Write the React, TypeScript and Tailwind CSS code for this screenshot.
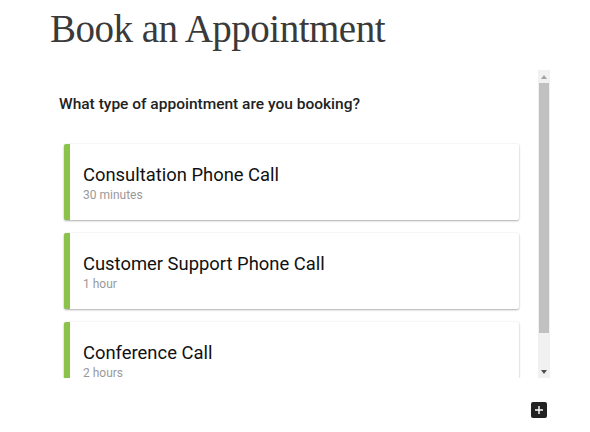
import React from 'react';

type Appointment = {
  name: string;
  duration: string;
};

const appointments: Appointment[] = [
  { name: 'Consultation Phone Call', duration: '30 minutes' },
  { name: 'Customer Support Phone Call', duration: '1 hour' },
  { name: 'Conference Call', duration: '2 hours' },
];

function Scrollbar() {
  return (
    <div className="w-[12px] h-full bg-[#f1f1f1] flex flex-col shrink-0">
      {/* 上矢印 */}
      <div className="h-[13px] flex items-center justify-center">
        <svg width="6" height="4" viewBox="0 0 6 4">
          <path d="M3 0L6 4H0z" fill="#a3a3a3" />
        </svg>
      </div>
      {/* つまみ */}
      <div className="h-[250px] mx-[1px] bg-[#c1c1c1]" />
      <div className="flex-1" />
      {/* 下矢印 */}
      <div className="h-[13px] flex items-center justify-center">
        <svg width="6" height="4" viewBox="0 0 6 4">
          <path d="M0 0H6L3 4z" fill="#505050" />
        </svg>
      </div>
    </div>
  );
}

export default function App() {
  return (
    <div className="w-[590px] h-[432px] bg-white overflow-hidden font-['Roboto',sans-serif]">
      <h1 className="mt-[9px] pl-[50px] text-[39px] leading-[40px] tracking-[-0.5px] text-[#3a3a3a] font-normal font-['Liberation_Serif',serif]">
        Book an Appointment
      </h1>

      <div className="mt-[21px] ml-[50px] w-[500px] h-[308px] flex">
        <div className="flex-1 overflow-hidden">
          <div className="pt-[24px] pl-[9px] text-[15.5px] leading-[20px] font-medium text-[#222]">
            What type of appointment are you booking?
          </div>
          <div className="mt-[30px] pl-[14px] flex flex-col gap-[13px]">
            {appointments.map((a) => (
              <div
                key={a.name}
                className="w-[455px] h-[76px] shrink-0 bg-white border-l-[6px] border-[#8bc34a] rounded-[2px] shadow-[0_1px_2px_rgba(0,0,0,0.3),0_0_2px_rgba(0,0,0,0.08)] pl-[13px] pt-[19px]"
              >
                <div className="text-[18.4px] leading-[24px] text-[#111]">{a.name}</div>
                <div className="text-[12px] leading-[16px] text-[#9a9a9a]">{a.duration}</div>
              </div>
            ))}
          </div>
        </div>
        <Scrollbar />
      </div>

      <div className="mt-[24px] flex justify-end pr-[43px]">
        <button className="w-[16px] h-[16px] rounded-[2px] bg-[#222] flex items-center justify-center">
          <svg width="10" height="10" viewBox="0 0 10 10">
            <path d="M5 1V9M1 5H9" stroke="#fff" strokeWidth="1.4" />
          </svg>
        </button>
      </div>
    </div>
  );
}
